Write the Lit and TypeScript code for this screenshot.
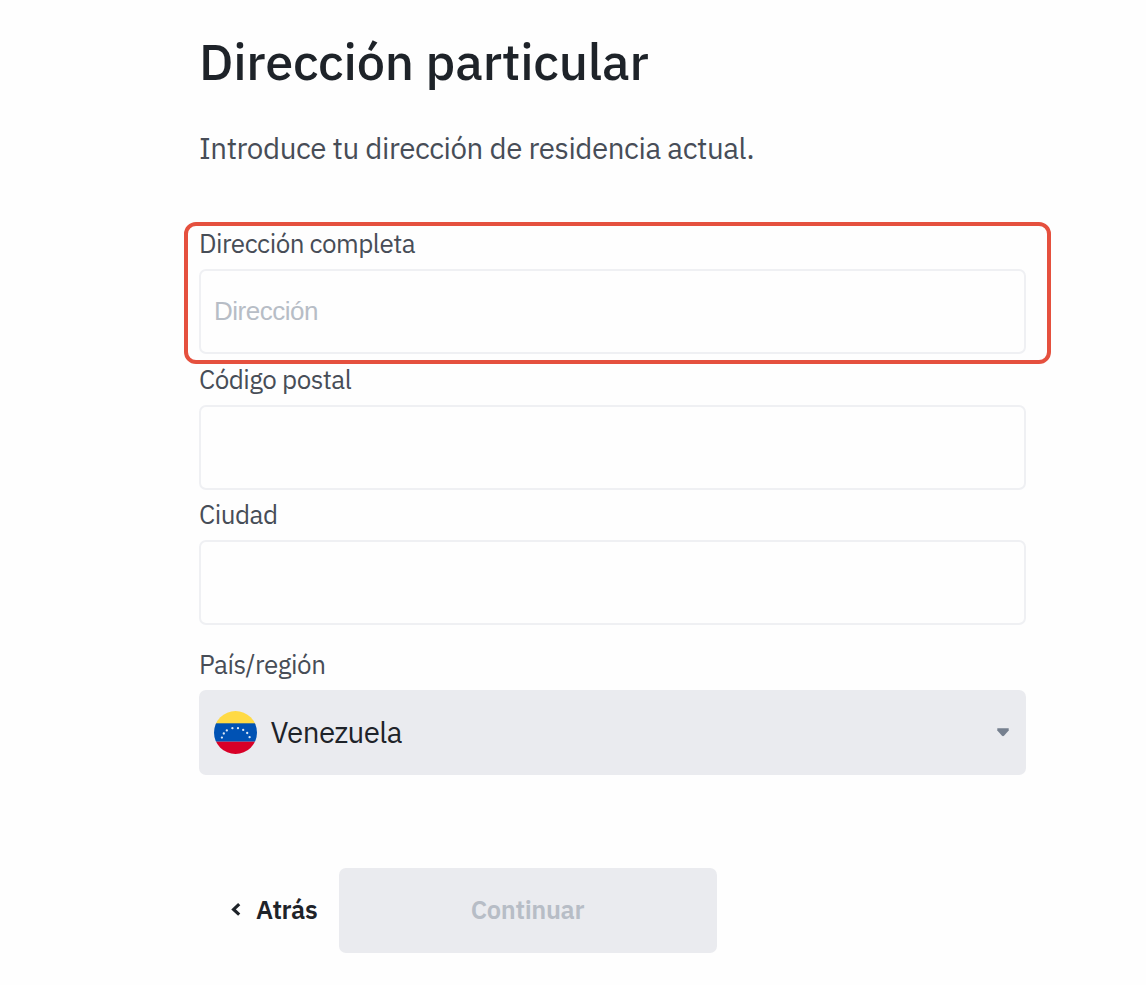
import { LitElement, html, svg, css } from 'lit';
import { customElement, property } from 'lit/decorators.js';

/**
 * Labelled text input of the address form.
 */
@customElement('address-field')
export class AddressField extends LitElement {
    static override styles = css`
        :host {
            display: block;
            position: relative;
        }

        .label {
            display: block;
            height: 36px;
            line-height: 34px;
            margin-bottom: 7px;
            font-size: 26px;
            letter-spacing: -0.5px;
            color: #474d57;
        }

        .input {
            display: block;
            box-sizing: border-box;
            width: 100%;
            height: 85px;
            padding: 0 13px;
            border: 2px solid #eff0f3;
            border-radius: 7px;
            background: #fefefe;
            outline: none;
            font: 26px 'Liberation Sans', sans-serif;
            letter-spacing: -0.5px;
            color: #1e2329;
        }

        .input::placeholder {
            color: #b7bdc6;
            opacity: 1;
        }

        /* Frame that calls attention to the field */
        .highlight {
            position: absolute;
            inset: -4px -24.5px -10px -15px;
            border: 4px solid #e5503e;
            border-radius: 12px;
            pointer-events: none;
        }
    `;

    @property() label = '';
    @property() placeholder = '';
    @property({ type: Boolean }) highlighted = false;

    override render() {
        return html`
            <label class="label" for="input">${this.label}</label>
            <input id="input" class="input" type="text" placeholder=${this.placeholder} />
            ${this.highlighted ? html`<div class="highlight"></div>` : ''}
        `;
    }
}

// Stars of the flag, along an arc in the blue stripe
const STARS = [
    [7.9, 26.6], [9.8, 22.5], [12.8, 19.4], [18.4, 17.2],
    [24, 17.2], [29.2, 18.9], [33.2, 22], [35.6, 26.2],
];

@customElement('app-root')
export class AppRoot extends LitElement {
    static override styles = css`
        :host {
            display: block;
            box-sizing: border-box;
            min-height: 985px;
            padding: 32px 120px 0 199px;
            background: #fefefe;
            font-family: 'IBM Plex Sans', Roboto, sans-serif;
            color: #1e2329;
        }

        .title {
            margin: 0;
            height: 62px;
            line-height: 58px;
            font-size: 50.5px;
            font-weight: 500;
            letter-spacing: -0.25px;
        }

        .intro {
            margin: 35px 0 0;
            height: 40px;
            line-height: 38px;
            font-size: 29.5px;
            letter-spacing: -0.43px;
            color: #474d57;
        }

        .form {
            display: flex;
            flex-direction: column;
            gap: 7.5px;
            margin-top: 57px;
        }

        .country {
            margin-top: 14px;
        }

        .country-label {
            height: 36px;
            line-height: 34px;
            margin-bottom: 7px;
            font-size: 26px;
            letter-spacing: -0.48px;
            color: #474d57;
        }

        .select {
            display: flex;
            align-items: center;
            height: 85px;
            box-sizing: border-box;
            padding: 0 17px 0 14.5px;
            border-radius: 7px;
            background: #eaebef;
        }

        .flag {
            flex: none;
            width: 43px;
            height: 43px;
        }

        .country-name {
            flex: 1;
            margin-left: 14px;
            padding-bottom: 1px;
            font-size: 29.5px;
            letter-spacing: -0.55px;
        }

        .caret {
            width: 12px;
            height: 9px;
        }

        .actions {
            display: flex;
            margin-top: 93px;
        }

        .back,
        .continue {
            display: flex;
            align-items: center;
            height: 85px;
            padding: 0 0 2px;
            border: 0;
            font: 600 25.5px 'IBM Plex Sans', Roboto, sans-serif;
            letter-spacing: -0.35px;
        }

        .back {
            width: 139.5px;
            padding-left: 31px;
            background: none;
            color: #1e2329;
        }

        .chevron {
            width: 11px;
            height: 14px;
            margin-right: 15px;
        }

        .continue {
            justify-content: center;
            width: 378px;
            border-radius: 7px;
            background: #eaebef;
            color: #b7bdc6;
        }
    `;

    private renderFlag() {
        return html`
            <svg class="flag" viewBox="0 0 43 43" aria-hidden="true">
                <clipPath id="round"><circle cx="21.5" cy="21.5" r="21.5" /></clipPath>
                <g clip-path="url(#round)">
                    <rect width="43" height="13" fill="#ffda44" />
                    <rect y="12.3" width="43" height="18.4" fill="#0052b4" />
                    <rect y="30.7" width="43" height="12.3" fill="#d80027" />
                    ${STARS.map(([x, y]) => svg`<circle cx=${x} cy=${y} r="1.15" fill="#dce8f5" />`)}
                </g>
            </svg>
        `;
    }

    override render() {
        return html`
            <h1 class="title">Dirección particular</h1>
            <p class="intro">Introduce tu dirección de residencia actual.</p>
            <div class="form">
                <address-field label="Dirección completa" placeholder="Dirección" highlighted></address-field>
                <address-field label="Código postal"></address-field>
                <address-field label="Ciudad"></address-field>
                <div class="country">
                    <div class="country-label">País/región</div>
                    <div class="select">
                        ${this.renderFlag()}
                        <span class="country-name">Venezuela</span>
                        <svg class="caret" viewBox="0 0 12 9" aria-hidden="true">
                            <path d="M0.3 0.3H11.7V2.5L7 7.8Q6 8.7 5 7.8L0.3 2.5Z" fill="#76808f" />
                        </svg>
                    </div>
                </div>
            </div>
            <div class="actions">
                <button class="back">
                    <svg class="chevron" viewBox="0 0 11 14" aria-hidden="true">
                        <path d="M9.2 2.2L3.6 7.4L9.2 12.6" fill="none" stroke="#1e2329" stroke-width="3.2" />
                    </svg>
                    Atrás
                </button>
                <button class="continue" disabled>Continuar</button>
            </div>
        `;
    }
}
